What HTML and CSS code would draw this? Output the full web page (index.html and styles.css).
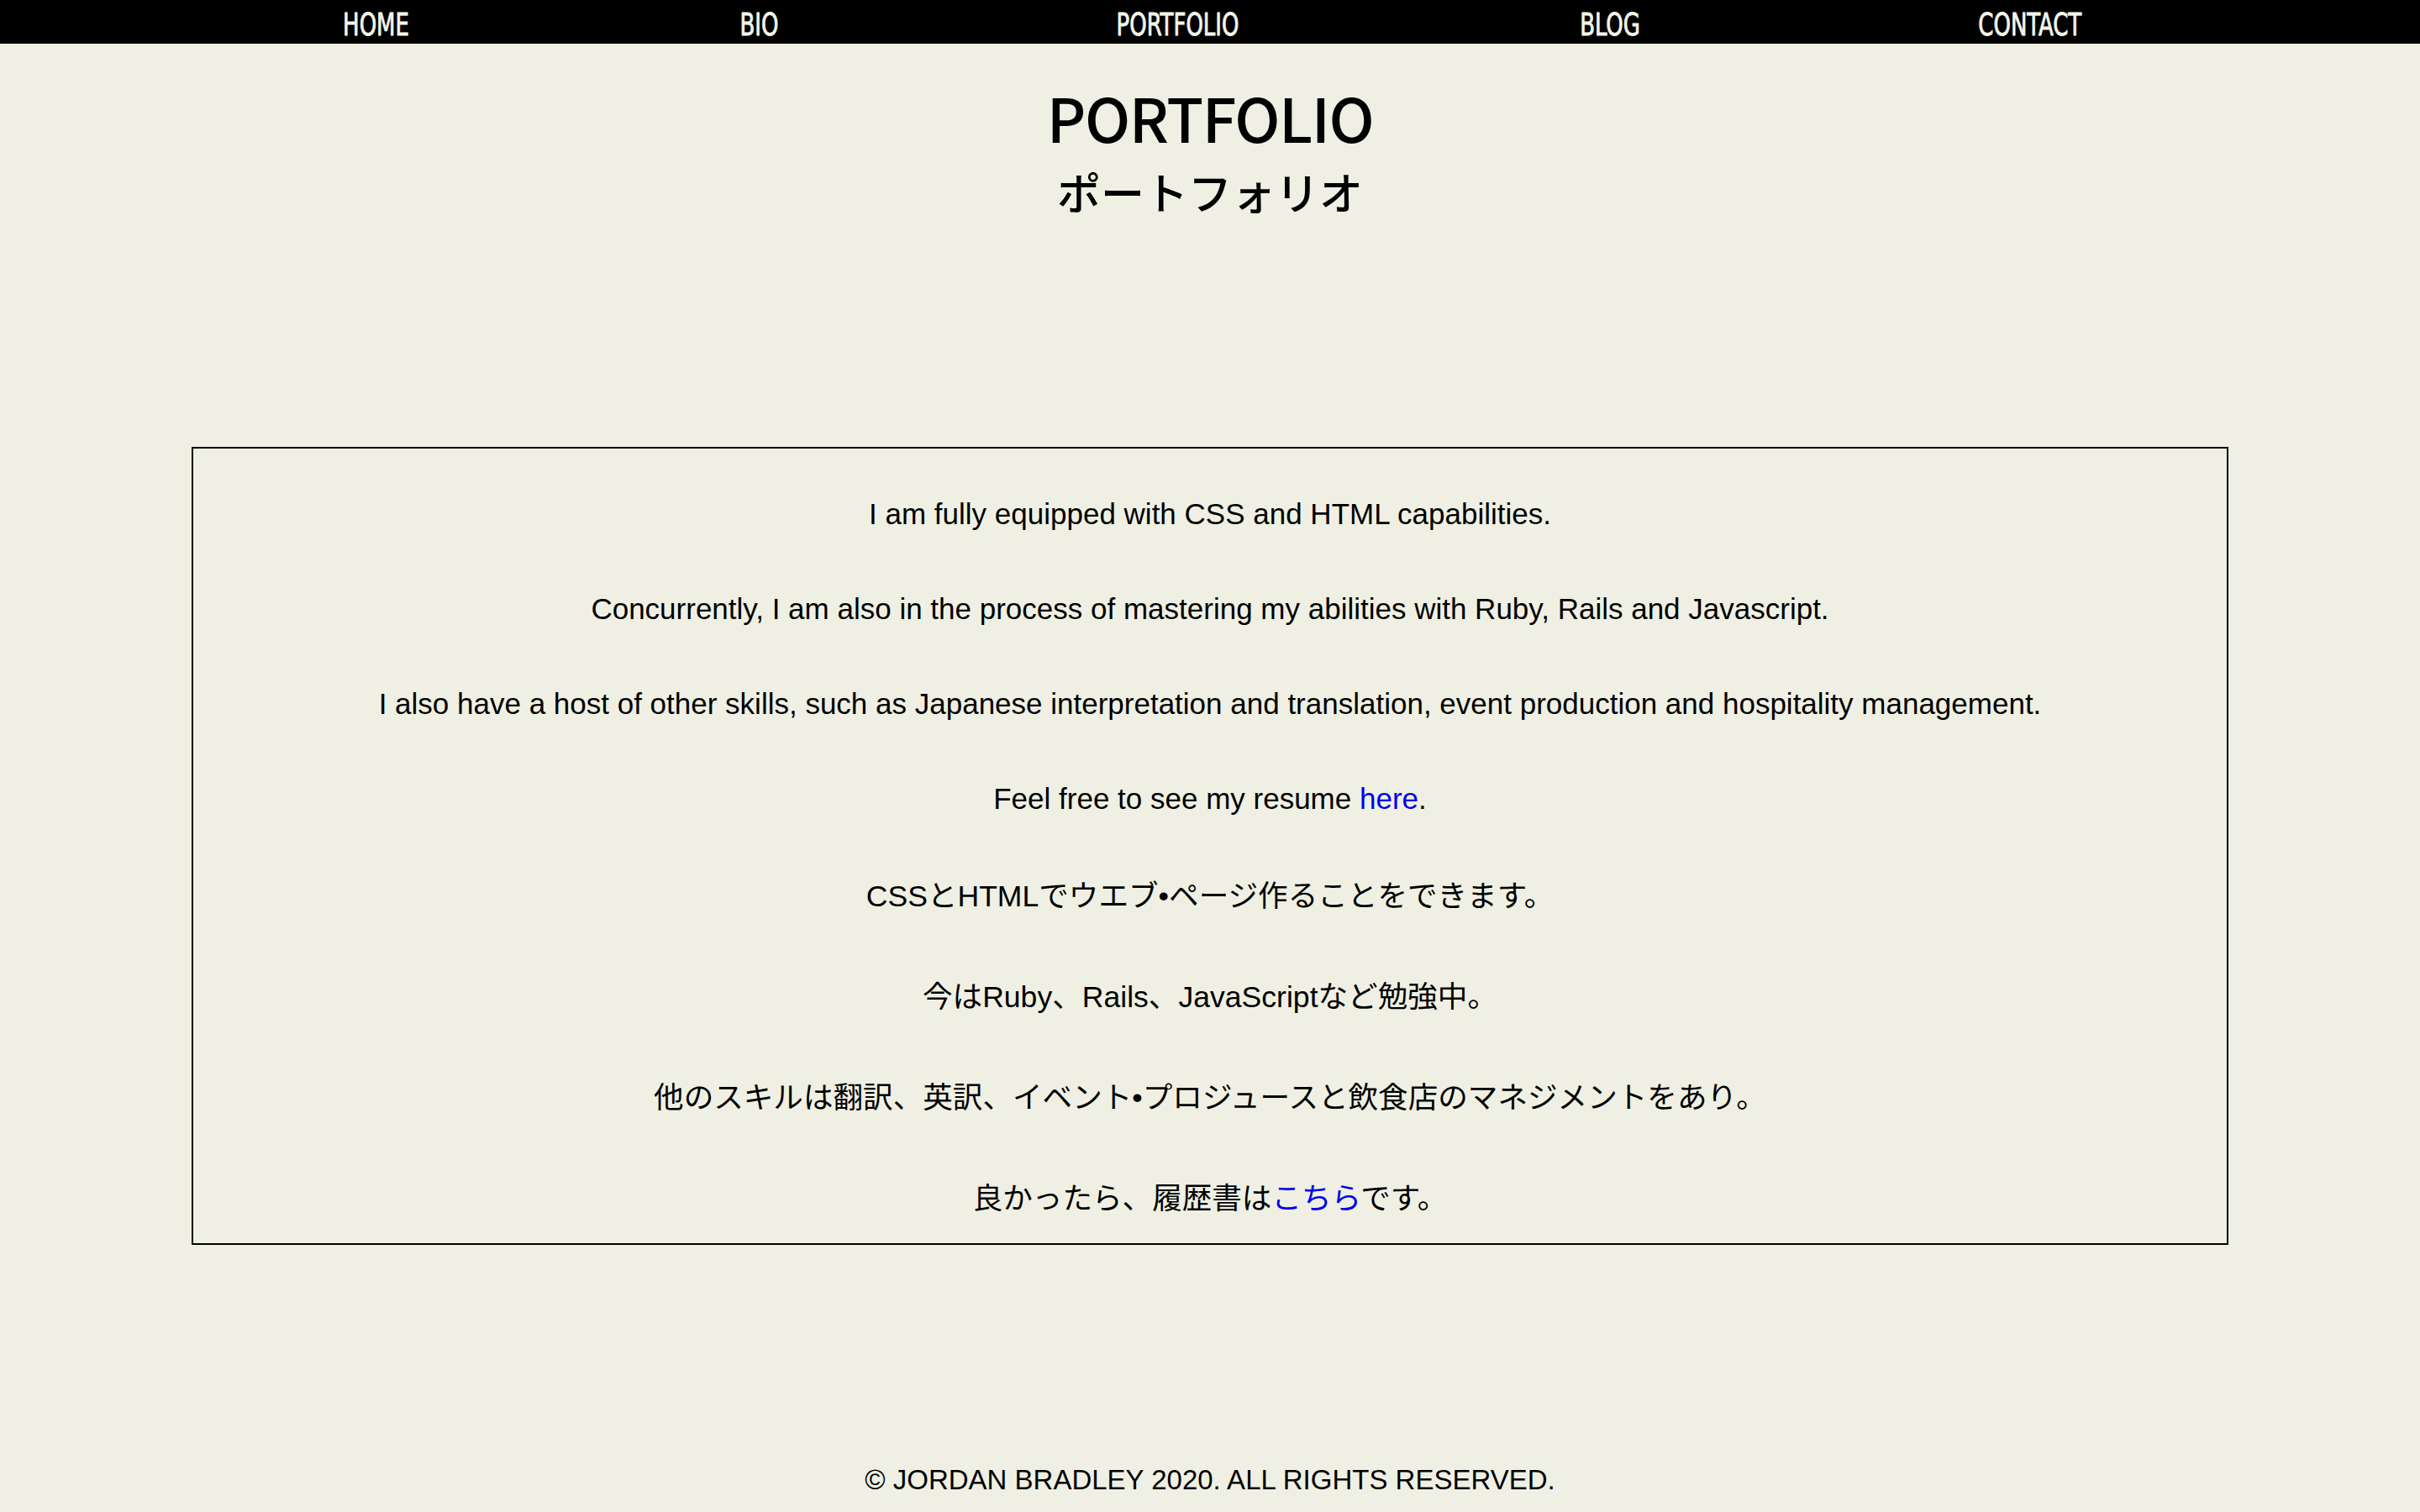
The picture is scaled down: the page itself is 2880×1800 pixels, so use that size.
FILE: index.html
```html
<!DOCTYPE html>
<html lang="en">
<head>
<meta charset="utf-8">
<title>Portfolio</title>
<link rel="stylesheet" href="styles.css">
</head>
<body>
<nav class="topnav">
  <a class="navlink" href="#"><span class="navtext">HOME</span></a>
  <a class="navlink" href="#"><span class="navtext">BIO</span></a>
  <a class="navlink" href="#"><span class="navtext">PORTFOLIO</span></a>
  <a class="navlink" href="#"><span class="navtext">BLOG</span></a>
  <a class="navlink" href="#"><span class="navtext">CONTACT</span></a>
</nav>
<header class="page-header">
  <h1 class="title-en">PORTFOLIO</h1>
  <h2 class="title-jp">ポートフォリオ</h2>
</header>
<main class="content-box">
  <p class="line en">I am fully equipped with CSS and HTML capabilities.</p>
  <p class="line en">Concurrently, I am also in the process of mastering my abilities with Ruby, Rails and Javascript.</p>
  <p class="line en">I also have a host of other skills, such as Japanese interpretation and translation, event production and hospitality management.</p>
  <p class="line en">Feel free to see my resume <a class="link" href="#">here</a>.</p>
  <p class="line jp">CSSとHTMLでウエブ•ページ作ることをできます。</p>
  <p class="line jp">今はRuby、Rails、JavaScriptなど勉強中。</p>
  <p class="line jp">他のスキルは翻訳、英訳、イベント•プロジュースと飲食店のマネジメントをあり。</p>
  <p class="line jp">良かったら、履歴書は<a class="link" href="#">こちら</a>です。</p>
</main>
<footer class="page-footer">© JORDAN BRADLEY 2020. ALL RIGHTS RESERVED.</footer>
</body>
</html>
```
FILE: styles.css
```css
html, body {
  margin: 0;
  padding: 0;
}
body {
  background: #eff0e3;
  color: #000;
  font-family: "Liberation Sans", "Noto Sans CJK JP", sans-serif;
  min-height: 1800px;
}
.topnav {
  height: 52px;
  overflow: hidden;
  background: #000;
  display: flex;
  justify-content: space-evenly;
  align-items: flex-start;
  padding: 0 10px 0 22px;
}
.navlink {
  color: #f3f4ea;
  text-decoration: none;
  font-family: "DejaVu Sans Condensed", "DejaVu Sans", sans-serif;
  font-weight: normal;
  font-size: 37px;
  line-height: 59px;
  display: block;
  -webkit-text-stroke: 0.9px #f3f4ea;
}
.navtext {
  display: inline-block;
  transform: scaleX(0.78);
  transform-origin: center;
}
.page-header {
  padding-top: 50px;
  text-align: center;
}
.title-en {
  margin: 0;
  font-family: "Noto Sans CJK JP", sans-serif;
  font-weight: 500;
  font-size: 72px;
  letter-spacing: -1.5px;
  line-height: 74px;
}
.title-jp {
  margin: 26px 0 0;
  font-family: "Noto Sans CJK JP", sans-serif;
  font-weight: 500;
  font-size: 52px;
  line-height: 52px;
}
.content-box {
  margin: 278px 228px 0;
  border: 2px solid #000;
  padding: 58px 20px 29px;
  display: flex;
  flex-direction: column;
  gap: 73px;
  text-align: center;
}
.line {
  margin: 0;
  font-size: 35px;
}
.line.en {
  line-height: 40px;
}
.line.jp {
  font-size: 35.6px;
  line-height: 47px;
}
.link {
  color: #0000ee;
  text-decoration: none;
}
.page-footer {
  margin-top: 261px;
  text-align: center;
  font-size: 33px;
  line-height: 38px;
}
```
